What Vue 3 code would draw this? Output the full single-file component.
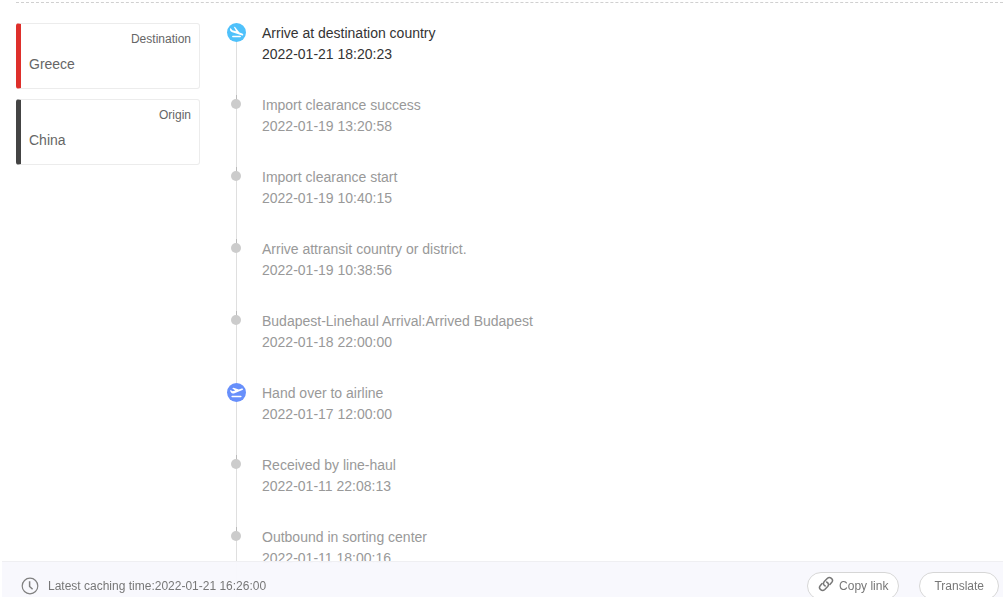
<script setup>
const places = [
  { label: 'Destination', name: 'Greece', kind: 'destination' },
  { label: 'Origin', name: 'China', kind: 'origin' }
]

const events = [
  { text: 'Arrive at destination country', time: '2022-01-21 18:20:23', icon: 'landing' },
  { text: 'Import clearance success', time: '2022-01-19 13:20:58' },
  { text: 'Import clearance start', time: '2022-01-19 10:40:15' },
  { text: 'Arrive attransit country or district.', time: '2022-01-19 10:38:56' },
  { text: 'Budapest-Linehaul Arrival:Arrived Budapest', time: '2022-01-18 22:00:00' },
  { text: 'Hand over to airline', time: '2022-01-17 12:00:00', icon: 'takeoff' },
  { text: 'Received by line-haul', time: '2022-01-11 22:08:13' },
  { text: 'Outbound in sorting center', time: '2022-01-11 18:00:16' }
]
</script>

<template>
  <div class="page">
    <main class="details">
      <aside class="places">
        <section v-for="place in places" :key="place.kind" class="place" :class="place.kind">
          <div class="place-label">{{ place.label }}</div>
          <div class="place-name">{{ place.name }}</div>
        </section>
      </aside>

      <ol class="timeline">
        <li v-for="(event, i) in events" :key="event.time" class="event" :class="{ current: i === 0 }">
          <div class="rail">
            <svg v-if="event.icon === 'landing'" class="badge" viewBox="0 0 19 19" aria-hidden="true">
              <circle cx="9.5" cy="9.5" r="9.5" fill="#4fc1fb" />
              <path d="M3 5.200l1 .4 1.300 1.700 3.800 1-2.300-4.600 1.300.4 4.400 5.400 2.700 1c1.500.7 1.500 2.200.1 1.900L5.300 9.200C3.900 8.700 3.100 7.900 3 6.800z" fill="#fff" />
              <path d="M5.800 13.500h7.400" stroke="#fff" stroke-width="1.500" stroke-linecap="round" />
            </svg>
            <svg v-else-if="event.icon === 'takeoff'" class="badge" viewBox="0 0 19 19" aria-hidden="true">
              <circle cx="9.5" cy="9.5" r="9.5" fill="#678ffb" />
              <path d="M2.900 7.600l1-.3 1.700 1 2.600-.7-3.100-2.400 1.500-.5 5.200 1.700 2.900-.8c1.700-.4 2 .9.700 1.400L6.900 10.400c-1.400.4-2.200.1-2.800-.8z" fill="#fff" />
              <path d="M5.200 13.500h8.600" stroke="#fff" stroke-width="1.600" stroke-linecap="round" />
            </svg>
            <span v-else class="dot"></span>
          </div>
          <div class="event-body">
            <div>{{ event.text }}</div>
            <time>{{ event.time }}</time>
          </div>
        </li>
      </ol>
    </main>

    <footer class="bar">
      <div class="cache">
        <svg class="clock" viewBox="0 0 18 18" aria-hidden="true">
          <g fill="none" stroke="#808080" stroke-width="1.200">
            <circle cx="9" cy="9" r="7.800" />
            <path d="M8.600 4.300v5.200l3 2.700" stroke-width="1.500" />
          </g>
        </svg>
        <span>Latest caching time:2022-01-21 16:26:00</span>
      </div>
      <div class="actions">
        <button type="button" class="pill with-icon">
          <svg class="link" viewBox="0 0 16 16" aria-hidden="true">
            <g fill="none" stroke="#777" stroke-width="1.500" stroke-linecap="round">
              <path d="M7.200 10C5.200 9 5 6.900 6.300 5.500l2.900-3c2.700-2.600 6.900.8 4.600 3.800l-1.900 2.100" />
              <path d="M8.600 6c2 .9 2.400 3 1.100 4.500l-2.900 3c-2.700 2.600-6.900-.8-4.600-3.800l1.900-2.100" />
            </g>
          </svg>
          Copy link
        </button>
        <button type="button" class="pill">Translate</button>
      </div>
    </footer>
  </div>
</template>

<style>
body {
  background: #fff;
}
</style>

<style scoped>
.page {
  height: 100vh;
  padding: 2px 0 0 16px;
  box-sizing: border-box;
  overflow: hidden;
  font-family: "Liberation Sans", Arial, sans-serif;
  font-size: 14px;
  line-height: 21px;
}

.details {
  display: flex;
  gap: 27px;
  padding-top: 20px;
  border-top: 1px dashed #d0d0d0;
}

.places {
  display: flex;
  flex: 0 0 184px;
  flex-direction: column;
  gap: 10px;
}

.place {
  height: 66px;
  padding: 5px 8px 0;
  box-sizing: border-box;
  border: 1px solid #ececec;
  border-left: 5px solid #de2f2b;
  border-radius: 3px;
  color: #666;
}

.place.origin {
  border-left-color: #444;
}

.place-label {
  font-size: 12px;
  text-align: right;
}

.place-name {
  margin-top: 4px;
}

.timeline {
  flex: 1;
  margin: 0;
  padding: 0;
  list-style: none;
}

.event {
  display: flex;
  gap: 16px;
  height: 72px;
  color: #999;
}

.event.current {
  color: #333;
}

.rail {
  display: flex;
  flex: 0 0 19px;
  justify-content: center;
  align-items: flex-start;
  background: linear-gradient(#dfdfdf, #dfdfdf) 9px 0 / 1px 100% no-repeat;
}

/* The rail is darker in the short stretch that leads into a dot. */
.rail:has(.dot) {
  background: linear-gradient(#bbb 5px, #dfdfdf 5px) 9px 0 / 1px 100% no-repeat;
}

.badge {
  width: 19px;
  height: 19px;
}

.dot {
  width: 10px;
  height: 10px;
  margin: 4px 1px 0 0;
  border-radius: 50%;
  background: #ccc;
}

.event-body time {
  display: block;
}

.bar {
  position: fixed;
  right: 0;
  bottom: 0;
  left: 2px;
  display: flex;
  justify-content: space-between;
  align-items: flex-start;
  height: 36px;
  padding: 10px 4px 0 19px;
  box-sizing: border-box;
  overflow: hidden;
  border-top: 1px solid #efeff2;
  background: rgba(248, 248, 253, 0.97);
  color: #777;
  font-size: 12px;
}

.cache {
  display: flex;
  align-items: center;
  gap: 9px;
  height: 28px;
}

.clock {
  width: 18px;
  height: 18px;
}

.actions {
  display: flex;
  gap: 20px;
}

.pill {
  display: flex;
  align-items: center;
  gap: 5px;
  height: 28px;
  padding: 0 14px;
  box-sizing: border-box;
  border: 1px solid #d6d6d6;
  border-radius: 14px;
  background: #fff;
  color: #777;
  font: inherit;
  cursor: pointer;
}

.pill.with-icon {
  padding: 0 10px;
}

.link {
  width: 16px;
  height: 16px;
  margin-bottom: 4px;
}
</style>
